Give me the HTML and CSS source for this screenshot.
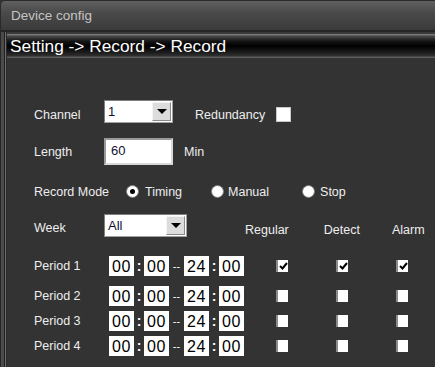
FILE: index.html
```html
<!DOCTYPE html>
<html lang="en">
<head>
    <meta charset="UTF-8">
    <title>Device config</title>
    <link rel="stylesheet" href="styles.css">
</head>
<body>

    <div class="window">
        <div class="titlebar">Device config</div>
        <div class="frame">
            <div class="frame-edge"></div>
            <div class="panel">
                <div class="crumb">Setting -&gt; Record -&gt; Record</div>
                <div class="content">

                    <div class="row row-channel">
                        <span class="label">Channel</span>
                        <div class="select sel-channel">
                            <span class="sel-text">1</span>
                            <span class="sel-btn"><i class="arrow"></i></span>
                        </div>
                        <span class="text redund">Redundancy</span>
                        <span class="box"></span>
                    </div>

                    <div class="row row-length">
                        <span class="label">Length</span>
                        <div class="input">60</div>
                        <span class="text unit">Min</span>
                    </div>

                    <div class="row row-mode">
                        <span class="label">Record Mode</span>
                        <span class="radio on mode-timing"></span>
                        <span class="text">Timing</span>
                        <span class="radio mode-manual"></span>
                        <span class="text">Manual</span>
                        <span class="radio mode-stop"></span>
                        <span class="text">Stop</span>
                    </div>

                    <div class="row row-week">
                        <span class="label">Week</span>
                        <div class="select sel-week">
                            <span class="sel-text">All</span>
                            <span class="sel-btn"><i class="arrow"></i></span>
                        </div>
                        <span class="text head-regular">Regular</span>
                        <span class="text head-detect">Detect</span>
                        <span class="text head-alarm">Alarm</span>
                    </div>

                    <div class="row period p1">
                        <span class="label">Period 1</span>
                        <span class="tbox first">00</span><span class="sep">:</span><span class="tbox">00</span><span class="dash">--</span><span class="tbox">24</span><span class="sep">:</span><span class="tbox">00</span>
                        <span class="chk c-regular"><svg width="9" height="8" viewBox="0 0 9 8"><path d="M1 4 L3.5 6.5 L8 1" fill="none" stroke="#000" stroke-width="2"/></svg></span>
                        <span class="chk c-detect"><svg width="9" height="8" viewBox="0 0 9 8"><path d="M1 4 L3.5 6.5 L8 1" fill="none" stroke="#000" stroke-width="2"/></svg></span>
                        <span class="chk c-alarm"><svg width="9" height="8" viewBox="0 0 9 8"><path d="M1 4 L3.5 6.5 L8 1" fill="none" stroke="#000" stroke-width="2"/></svg></span>
                    </div>

                    <div class="row period p2">
                        <span class="label">Period 2</span>
                        <span class="tbox first">00</span><span class="sep">:</span><span class="tbox">00</span><span class="dash">--</span><span class="tbox">24</span><span class="sep">:</span><span class="tbox">00</span>
                        <span class="chk c-regular"></span>
                        <span class="chk c-detect"></span>
                        <span class="chk c-alarm"></span>
                    </div>

                    <div class="row period p3">
                        <span class="label">Period 3</span>
                        <span class="tbox first">00</span><span class="sep">:</span><span class="tbox">00</span><span class="dash">--</span><span class="tbox">24</span><span class="sep">:</span><span class="tbox">00</span>
                        <span class="chk c-regular"></span>
                        <span class="chk c-detect"></span>
                        <span class="chk c-alarm"></span>
                    </div>

                    <div class="row period p4">
                        <span class="label">Period 4</span>
                        <span class="tbox first">00</span><span class="sep">:</span><span class="tbox">00</span><span class="dash">--</span><span class="tbox">24</span><span class="sep">:</span><span class="tbox">00</span>
                        <span class="chk c-regular"></span>
                        <span class="chk c-detect"></span>
                        <span class="chk c-alarm"></span>
                    </div>

                </div>
            </div>
        </div>
    </div>

</body>
</html>
```

FILE: styles.css
```css
body {
    margin: 0;
    padding: 0;
    background: #333333;
    font-family: 'Liberation Sans', Arial, sans-serif;
}
.window {
    width: 435px;
    height: 367px;
    overflow: hidden;
    display: flex;
    flex-direction: column;
    background: #333333;
}
.titlebar {
    height: 32px;
    box-sizing: border-box;
    line-height: 29px;
    padding-left: 10px;
    font-size: 13.5px;
    color: #c4c4c4;
    background: linear-gradient(#606060, #4a4a4a 40%, #3a3a3a);
    border-top-left-radius: 5px;
    border-top: 1px solid #2a2a2a;
    border-left: 1px solid #2a2a2a;
    border-bottom: 2px solid #262626;
}
.frame {
    flex: 1;
    display: flex;
}
.frame-edge {
    width: 7px;
    background: linear-gradient(to right, #262626 0 1px, #4b4b4b 1px 4px, #1f1f1f 4px 5px, #6e6e6e 5px 6px, #2a2a2a 6px 7px);
}
.panel {
    flex: 1;
    display: flex;
    flex-direction: column;
    padding-top: 2px;
    background: #3a3a3a;
}
.crumb {
    height: 24px;
    line-height: 24px;
    padding-left: 3px;
    font-size: 17.3px;
    color: #ffffff;
    background: linear-gradient(#8c8c8c 0, #4a4a4a 2px, #151515 30%, #000000 50%, #1a1a1a 75%, #2e2e2e 90%, #6a6a6a 100%);
}
.content {
    flex: 1;
    background: #333333;
    padding: 42px 0 0 27px;
}
.row {
    display: flex;
    align-items: center;
    font-size: 12.5px;
    color: #eeeeee;
}
.label {
    width: 70px;
    flex: none;
    white-space: nowrap;
}
.text {
    white-space: nowrap;
}

/* selects and inputs */
.select {
    height: 23px;
    box-sizing: border-box;
    background: #fff;
    border: 1px solid #a0a0a0;
    border-top-color: #808080;
    border-left-color: #808080;
    display: flex;
    align-items: center;
    justify-content: space-between;
    color: #101030;
}
.sel-channel {
    width: 69px;
}
.sel-week {
    width: 83px;
}
.sel-text {
    padding-left: 3px;
    font-size: 13px;
}
.sel-btn {
    width: 19px;
    height: 19px;
    margin-right: 1px;
    box-sizing: border-box;
    background: #dcdcdc;
    border: 1px solid #f4f4f4;
    border-right-color: #8a8a8a;
    border-bottom-color: #8a8a8a;
    display: flex;
    align-items: center;
    justify-content: center;
}
.arrow {
    width: 0;
    height: 0;
    border-left: 5px solid transparent;
    border-right: 5px solid transparent;
    border-top: 5px solid #000;
}
.input {
    width: 69px;
    height: 27px;
    box-sizing: border-box;
    background: #fff;
    border: 2px solid #9a9a9a;
    border-right-color: #d8d8d8;
    border-bottom-color: #d8d8d8;
    padding-left: 5px;
    line-height: 22px;
    font-size: 13px;
    color: #101030;
}
.box {
    width: 15px;
    height: 15px;
    box-sizing: border-box;
    background: #fff;
    border: 1px solid #c8c8c8;
    margin-left: 11px;
    margin-top: 6px;
}
.redund {
    margin-left: 22px;
}
.unit {
    margin-left: 11px;
}

/* rows spacing */
.row-channel {
    height: 23px;
}
.row-channel .label,
.row-channel .redund {
    margin-top: 7px;
}
.row-length {
    height: 27px;
    margin-top: 15px;
}
.row-mode {
    height: 20px;
    margin-top: 16px;
}
.row-mode .text,
.row-mode .label {
    margin-top: 2px;
}
.row-week {
    height: 23px;
    margin-top: 13px;
}
.row-week .label {
    margin-top: 5px;
}
.p1 {
    margin-top: 19px;
}
.p2 {
    margin-top: 10px;
}
.p3, .p4 {
    margin-top: 5px;
}

/* radios */
.radio {
    width: 13px;
    height: 13px;
    border-radius: 50%;
    background: #fff;
    border: 1px solid #7a7a7a;
    box-sizing: border-box;
    margin-right: 6px;
    position: relative;
}
.radio.on::after {
    content: "";
    position: absolute;
    left: 3px;
    top: 3px;
    width: 5px;
    height: 5px;
    border-radius: 50%;
    background: #000;
}
.mode-timing {
    margin-left: 22px;
}
.mode-manual {
    margin-left: 29px;
    margin-right: 4px;
}
.mode-stop {
    margin-left: 33px;
    margin-right: 5px;
}

/* headers */
.head-regular {
    margin-left: 58px;
    margin-top: 9px;
}
.head-detect {
    margin-left: 35px;
    margin-top: 9px;
}
.head-alarm {
    margin-left: 32px;
    margin-top: 9px;
}

/* period rows */
.period {
    height: 20px;
}
.tbox {
    width: 25px;
    height: 20px;
    background: #fff;
    color: #000;
    font-size: 16px;
    line-height: 21px;
    text-align: center;
    letter-spacing: 0.5px;
}
.tbox.first {
    margin-left: 5px;
}
.sep {
    width: 10px;
    text-align: center;
    font-weight: bold;
    font-size: 14px;
    color: #fff;
}
.dash {
    width: 15px;
    text-align: center;
    font-size: 11px;
    color: #fff;
    letter-spacing: 0;
}
.chk {
    width: 12px;
    height: 12px;
    box-sizing: border-box;
    background: #fff;
    border-left: 2px solid #8c8c8c;
    display: flex;
    align-items: center;
    justify-content: center;
}
.c-regular {
    margin-left: 32px;
}
.c-detect, .c-alarm {
    margin-left: 48px;
}
```
